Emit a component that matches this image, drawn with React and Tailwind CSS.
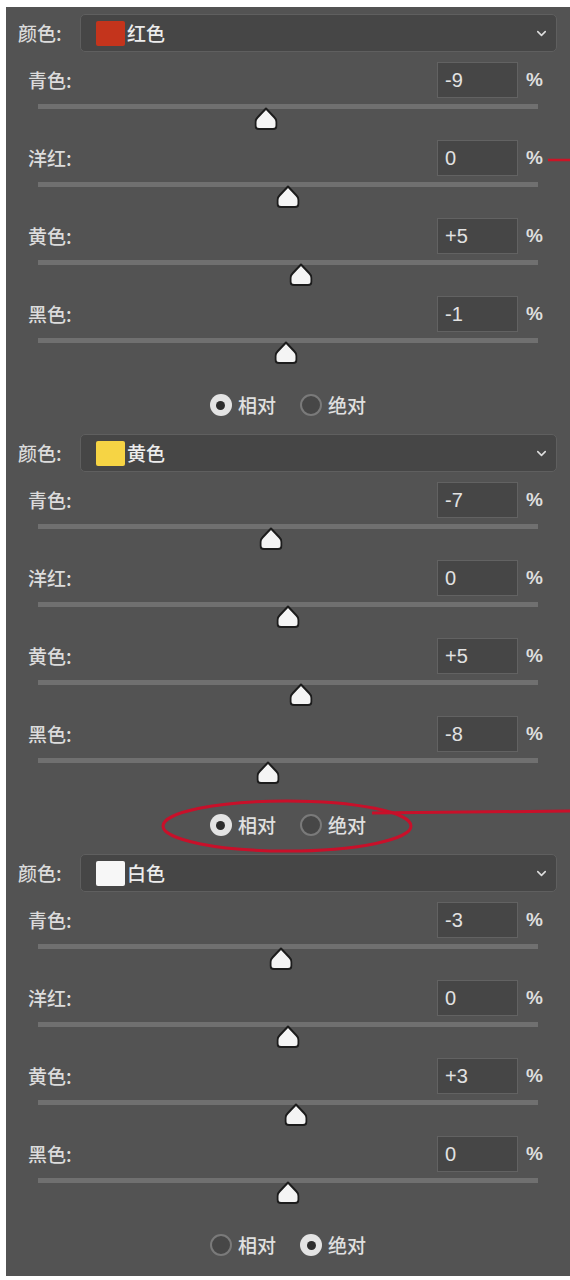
import { ChevronDown } from 'lucide-react';

const cjk = { fontFamily: '"Noto Sans CJK SC", "Liberation Sans", sans-serif' };
const latin = { fontFamily: '"Liberation Sans", "Noto Sans CJK SC", sans-serif' };

const sections = [
  {
    name: '红色',
    swatch: 'bg-[#c4341c]',
    values: [-9, 0, 5, -1],
    mode: 'relative',
  },
  {
    name: '黄色',
    swatch: 'bg-[#f6d444]',
    values: [-7, 0, 5, -8],
    mode: 'relative',
  },
  {
    name: '白色',
    swatch: 'bg-[#f7f7f7]',
    values: [-3, 0, 3, 0],
    mode: 'absolute',
  },
];

const channels = ['青色', '洋红', '黄色', '黑色'];

function fmt(v) {
  return v > 0 ? `+${v}` : `${v}`;
}

function Thumb() {
  return (
    <svg width="23" height="23" viewBox="0 0 23 23">
      <path
        d="M11.5 1.5 L20 10.5 Q22 12.5 22 15 L22 18.5 Q22 22 18.5 22 L4.5 22 Q1 22 1 18.5 L1 15 Q1 12.5 3 10.5 Z"
        fill="#f4f4f4"
        stroke="#1c1c1c"
        strokeWidth="2"
        strokeLinejoin="round"
      />
    </svg>
  );
}

function SliderRow({ label, value }) {
  const pct = (value + 100) / 200;
  return (
    <div className="flex flex-col pb-[10px]">
      <div className="flex items-center h-[36px]">
        <span className="pl-[22px] text-[19px] font-medium text-[#dcdcdc] flex-1" style={cjk}>
          {label}:
        </span>
        <div
          className="w-[81px] h-[36px] bg-[#464646] border border-[#626262] flex items-center pl-[7px] text-[20px] text-[#e2e2e2]"
          style={latin}
        >
          {fmt(value)}
        </div>
        <span className="w-[52px] pl-[8px] text-[19px] text-[#dedede] font-bold" style={latin}>
          %
        </span>
      </div>
      <div className="ml-[32px] w-[500px] mt-[6px]">
        <div className="h-[5px] bg-[#707070]" />
        <div className="relative h-[21px]">
          <div
            className="absolute top-[-2px] -translate-x-1/2"
            style={{ left: `${pct * 100}%` }}
          >
            <Thumb />
          </div>
        </div>
      </div>
    </div>
  );
}

function Radio({ checked, label }) {
  return (
    <div className="flex items-center gap-[6px]">
      {checked ? (
        <div className="w-[22px] h-[22px] rounded-full bg-[#e4e4e4] flex items-center justify-center">
          <div className="w-[9px] h-[9px] rounded-full bg-[#2e2e2e]" />
        </div>
      ) : (
        <div className="w-[22px] h-[22px] rounded-full bg-[#474747] border-2 border-[#7a7a7a]" />
      )}
      <span className="text-[19px] font-medium text-[#e0e0e0]" style={cjk}>
        {label}
      </span>
    </div>
  );
}

function Section({ section }) {
  return (
    <div className="flex flex-col h-[420px]">
      <div className="flex items-center h-[38px]">
        <span className="pl-[12px] w-[74px] text-[19px] font-medium text-[#dcdcdc]" style={cjk}>
          颜色:
        </span>
        <div className="w-[477px] h-[38px] rounded-[5px] bg-[#464646] border border-[#5f5f5f] flex items-center pl-[15px] pr-[7px]">
          <div className={`w-[29px] h-[25px] rounded-[2px] ${section.swatch}`} />
          <span className="ml-[2px] text-[19px] font-medium text-[#ececec] flex-1" style={cjk}>
            {section.name}
          </span>
          <ChevronDown size={15} strokeWidth={2.5} color="#dddddd" />
        </div>
      </div>
      <div className="mt-[10px]">
        {channels.map((c, i) => (
          <SliderRow key={c} label={c} value={section.values[i]} />
        ))}
      </div>
      <div className="flex items-center justify-center gap-[24px] mt-[20px] h-[22px]">
        <Radio checked={section.mode === 'relative'} label="相对" />
        <Radio checked={section.mode === 'absolute'} label="绝对" />
      </div>
    </div>
  );
}

export default function App() {
  return (
    <div className="relative w-[570px] h-[1280px] bg-white pt-[7px] pl-[6px]">
      <div className="w-[564px] h-[1269px] bg-[#535353] pt-[7px]">
        {sections.map((s) => (
          <Section key={s.name} section={s} />
        ))}
      </div>
      <svg
        className="absolute left-0 top-0 pointer-events-none"
        width="570"
        height="1280"
        viewBox="0 0 570 1280"
      >
        <line x1="548" y1="160" x2="570" y2="160" stroke="#cc1426" strokeWidth="2.5" />
        <ellipse cx="287" cy="826" rx="124" ry="25" fill="none" stroke="#c8102a" strokeWidth="3" />
        <line x1="372" y1="813" x2="570" y2="811" stroke="#c8102a" strokeWidth="3" />
      </svg>
    </div>
  );
}
